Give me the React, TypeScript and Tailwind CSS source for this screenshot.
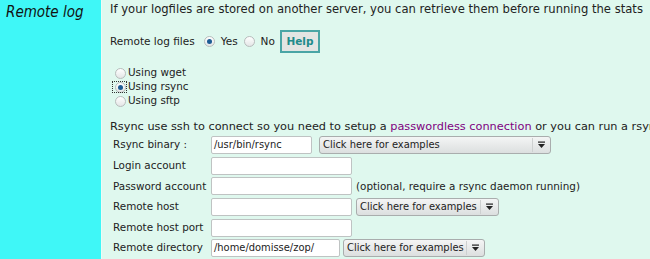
import React from 'react';

const font = { fontFamily: '"DejaVu Sans", Verdana, sans-serif' };
const condensed = { fontFamily: '"DejaVu Sans Condensed", "DejaVu Sans", sans-serif', fontStretch: 'condensed' as const };

function Radio({ checked = false }: { checked?: boolean }) {
  return (
    <span className="flex items-center justify-center w-[11px] h-[11px] rounded-full border border-[#b8bcbc] bg-gradient-to-b from-[#ffffff] to-[#e4e6e6] shrink-0">
      {checked && <span className="w-[5px] h-[5px] rounded-full bg-[#1d5c94]" />}
    </span>
  );
}

function ListRadio({ label, checked = false, focused = false }: { label: string; checked?: boolean; focused?: boolean }) {
  return (
    <div className="h-[14px] flex items-center">
      <span
        className={
          'ml-[2px] w-[15px] h-[12px] flex items-center justify-end pr-[1px] ' +
          (focused ? 'outline outline-1 outline-dotted outline-[#333] -outline-offset-1' : '')
        }
      >
        <Radio checked={checked} />
      </span>
      <span className="ml-[1px]">{label}</span>
    </div>
  );
}

function Arrow() {
  return (
    <svg width="9" height="8" viewBox="0 0 9 8" className="shrink-0">
      <rect x="1" y="0.5" width="7" height="1.2" fill="#222" />
      <path d="M1 3 L8 3 L4.5 7 Z" fill="#222" />
    </svg>
  );
}

function Select({ w }: { w: string }) {
  return (
    <div
      className={
        w +
        ' h-[18px] flex items-center justify-between rounded-[3px] border border-[#a9adad] bg-gradient-to-b from-[#f4f5f5] to-[#dcdfdf] pl-[3px] pr-[4px] text-[#222] text-[11px]'
      }
      style={condensed}
    >
      <span className="whitespace-nowrap">Click here for examples</span>
      <span className="flex items-center h-[14px] border-l border-[#cdd0d0] pl-[4px]">
        <Arrow />
      </span>
    </div>
  );
}

function Input({ w, value = '' }: { w: string; value?: string }) {
  return (
    <div
      className={
        w +
        ' h-[18px] flex items-center bg-white border border-[#bfc3c3] rounded-[2px] px-[2px] text-[#222] text-[11px]'
      }
      style={condensed}
    >
      {value}
    </div>
  );
}

function Row({ label, children }: { label: string; children?: React.ReactNode }) {
  return (
    <div className="h-[20.6px] flex items-center text-[10.4px]">
      <span className="w-[101px] pl-[3px] shrink-0 whitespace-nowrap">{label}</span>
      <div className="flex items-center">{children}</div>
    </div>
  );
}

export default function App() {
  return (
    <div className="w-[650px] h-[259px] overflow-hidden bg-[#eafbf5]" style={font}>
      <div className="grid grid-cols-[101px_1fr] gap-x-px h-full">
        <div className="bg-[#3ff7f7] pl-[6px] whitespace-nowrap">
          <span className="italic text-[15px] text-[#111] leading-[22px]" style={condensed}>
            Remote log
          </span>
        </div>
        <div className="bg-[#dff8ee] pl-[8px] text-[11.6px] text-[#222] overflow-hidden whitespace-nowrap">
          <div className="h-[18px] leading-[18px]">
            If your logfiles are stored on another server, you can retrieve them before running the stats
          </div>
          <div className="mt-[12px] h-[23px] flex items-center text-[10.5px]">
            <span>Remote log files</span>
            <span className="ml-[9px]">
              <Radio checked />
            </span>
            <span className="ml-[6px]">Yes</span>
            <span className="ml-[6px]">
              <Radio />
            </span>
            <span className="ml-[6px]">No</span>
            <button className="ml-[5px] h-[23px] w-[40px] border-2 border-[#4aa5a5] bg-[#e3e5e3] font-bold text-[#218b8b] text-[10.5px]">
              Help
            </button>
          </div>
          <div className="mt-[13px] flex flex-col text-[10.4px]">
            <ListRadio label="Using wget" />
            <ListRadio label="Using rsync" checked focused />
            <ListRadio label="Using sftp" />
          </div>
          <div className="mt-[11px] h-[16px] leading-[16px] text-[11.3px]">
            Rsync use ssh to connect so you need to setup a{' '}
            <a className="text-[#800080]">passwordless connection</a> or you can run a rsync daemon
          </div>
          <Row label="Rsync binary :">
            <Input w="w-[101px]" value="/usr/bin/rsync" />
            <div className="ml-[7px]">
              <Select w="w-[232px]" />
            </div>
          </Row>
          <Row label="Login account">
            <Input w="w-[141px]" />
          </Row>
          <Row label="Password account">
            <Input w="w-[141px]" />
            <span className="ml-[4px]">(optional, require a rsync daemon running)</span>
          </Row>
          <Row label="Remote host">
            <Input w="w-[141px]" />
            <div className="ml-[4px]">
              <Select w="w-[143px]" />
            </div>
          </Row>
          <Row label="Remote host port">
            <Input w="w-[141px]" />
          </Row>
          <Row label="Remote directory">
            <Input w="w-[129px]" value="/home/domisse/zop/" />
            <div className="ml-[3px]">
              <Select w="w-[142px]" />
            </div>
          </Row>
        </div>
      </div>
    </div>
  );
}
